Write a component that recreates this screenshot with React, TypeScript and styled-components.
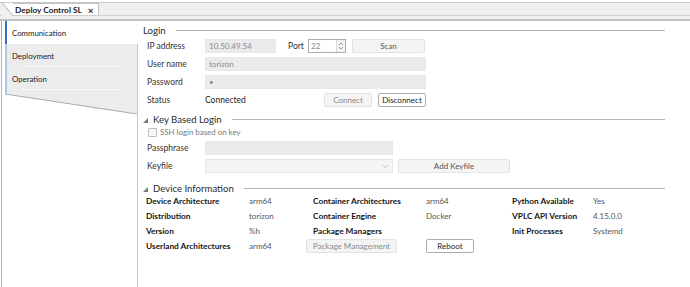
import React from 'react'
import styled, { createGlobalStyle } from 'styled-components'

const GlobalStyle = createGlobalStyle`
    html, body {
        margin : 0;
        padding : 0;
        background : #ffffff;
    }
    body {
        font-family : Lato, "Liberation Sans", sans-serif;
        font-size : 8.5px;
        color : #333333;
    }
    * {
        box-sizing : border-box;
    }
`

const sideItems = ['Communication', 'Deployment', 'Operation']

const deviceRows = [
    ['Device Architecture', 'arm64', 'Container Architectures', 'arm64', 'Python Available', 'Yes'],
    ['Distribution', 'torizon', 'Container Engine', 'Docker', 'VPLC API Version', '4.15.0.0'],
    ['Version', '%h', 'Package Managers', '', 'Init Processes', 'Systemd'],
]

const App = () => {
    return (
        <>
            <GlobalStyle />
            <Window>
                <TabStrip>
                    <DocTab>
                        <span>Deploy Control SL</span>
                        <CloseMark>×</CloseMark>
                    </DocTab>
                </TabStrip>
                <TabBase />

                <Body>
                    <Sidebar>
                        {sideItems.map((it, i) => (
                            <SideItem key={it} selected={i === 0}>{it}</SideItem>
                        ))}
                        <SideSlant>
                            <svg width='132' height='24' viewBox='0 0 132 24'>
                                <polygon points='0,0 132,0 132,24 0,4' fill='#ececec' />
                                <line x1='0' y1='4' x2='132' y2='24' stroke='#a9a9a9' strokeWidth='1' />
                                <line x1='1' y1='0' x2='1' y2='4' stroke='#a9c8ea' strokeWidth='2' />
                            </svg>
                        </SideSlant>
                        <SideRest />
                    </Sidebar>

                    <Main>
                        <SectionHeader>Login</SectionHeader>
                        <Form top={3}>
                            <FormRow>
                                <Label>IP address</Label>
                                <Field width={71}>10.50.49.54</Field>
                                <PortLabel>Port</PortLabel>
                                <Spin>
                                    <span>22</span>
                                    <SpinArrows>
                                        <svg width='6' height='10' viewBox='0 0 6 10'>
                                            <path d='M1 4 L3 2 L5 4' fill='none' stroke='#888' strokeWidth='0.9' />
                                            <path d='M1 6 L3 8 L5 6' fill='none' stroke='#888' strokeWidth='0.9' />
                                        </svg>
                                    </SpinArrows>
                                </Spin>
                                <Button width={73} gap={6}>Scan</Button>
                            </FormRow>
                            <FormRow>
                                <Label>User name</Label>
                                <Field width={221}>torizon</Field>
                            </FormRow>
                            <FormRow>
                                <Label>Password</Label>
                                <Field width={221}>•</Field>
                            </FormRow>
                            <FormRow>
                                <Label>Status</Label>
                                <StatusText>Connected</StatusText>
                                <Button width={48} dim>Connect</Button>
                                <Button width={48} gap={6} active>Disconnect</Button>
                            </FormRow>
                        </Form>

                        <SectionHeader collapsible gapTop={6}>Key Based Login</SectionHeader>
                        <Form top={2}>
                            <CheckRow>
                                <CheckBox />
                                <span>SSH login based on key</span>
                            </CheckRow>
                            <FormRow>
                                <Label>Passphrase</Label>
                                <Field width={188} />
                            </FormRow>
                            <FormRow>
                                <Label>Keyfile</Label>
                                <Combo>
                                    <svg width='7' height='5' viewBox='0 0 7 5'>
                                        <path d='M1 1 L3.5 3.5 L6 1' fill='none' stroke='#b8b8b8' strokeWidth='0.9' />
                                    </svg>
                                </Combo>
                                <Button width={112} gap={5}>Add Keyfile</Button>
                            </FormRow>
                        </Form>

                        <SectionHeader collapsible gapTop={9}>Device Information</SectionHeader>
                        <DeviceGrid>
                            {deviceRows.map((row) => row.map((cell, i) => (
                                i % 2 === 0
                                    ? <InfoLabel key={`${row[0]}_${i}`}>{cell}</InfoLabel>
                                    : <InfoValue key={`${row[0]}_${i}`}>{cell}</InfoValue>
                            )))}
                            <InfoLabel>Userland Architectures</InfoLabel>
                            <InfoValue>arm64</InfoValue>
                            <GridButtonCell>
                                <Button width={91} dim shift={-7}>Package Management</Button>
                            </GridButtonCell>
                            <GridButtonCell>
                                <Button width={48} active>Reboot</Button>
                            </GridButtonCell>
                        </DeviceGrid>
                    </Main>
                </Body>
            </Window>
        </>
    )
}

const Window = styled.div`
    width : 690px;
    height : 287px;
    display : flex;
    flex-direction : column;
    overflow : hidden;
    background : #ffffff;
`

const TabStrip = styled.div`
    margin-top : 2px;
    height : 14px;
    border-top : 1px solid #c9c9c9;
    border-bottom : 1px solid #d0d0d0;
    background : #efefef;
    display : flex;
    align-items : flex-end;
    padding-left : 2px;
`

const DocTab = styled.div`
    position : relative;
    height : 12px;
    display : flex;
    align-items : center;
    gap : 6px;
    padding : 0 4px 0 13px;
    background : #ffffff;
    border-top : 1px solid #c2c2c2;
    border-right : 1px solid #c2c2c2;
    font-weight : bold;
    font-size : 8.3px;
    color : #1a1a1a;

    &::before {
        content : '';
        position : absolute;
        left : 0;
        top : -1px;
        width : 11px;
        height : 13px;
        background : linear-gradient(to top right, #efefef 47%, #b8b8b8 50%, #ffffff 58%);
    }
`

const CloseMark = styled.span`
    font-size : 10px;
    line-height : 1;
    color : #222222;
`

const TabBase = styled.div`
    height : 5px;
    background : #f0f0f0;
    border-bottom : 2px solid #c3c3c3;
`

const Body = styled.div`
    flex : 1;
    display : flex;
    min-height : 0;
`

const Sidebar = styled.div`
    width : 137px;
    margin-left : 1px;
    border-left : 1px solid #b3b3b3;
    padding-left : 3px;
    display : flex;
    flex-direction : column;
`

const SideItem = styled.div<{ selected?: boolean }>`
    position : relative;
    height : 23px;
    display : flex;
    align-items : center;
    padding-left : 5px;
    font-size : 7.8px;
    color : #222222;
    background : ${(p) => (p.selected ? '#ffffff' : '#ececec')};
    border-left : 2px solid ${(p) => (p.selected ? '#2e6fc4' : '#a9c8ea')};
    border-right : 1px solid ${(p) => (p.selected ? 'transparent' : '#c8c8c8')};

    &::after {
        content : '';
        position : absolute;
        left : 15px;
        right : 15px;
        bottom : 0;
        height : 1px;
        background : ${(p) => (p.selected ? 'transparent' : '#fafafa')};
    }
`

const SideSlant = styled.div`
    height : 24px;
    display : flex;
    border-right : 1px solid #c8c8c8;

    svg {
        display : block;
    }
`

const SideRest = styled.div`
    flex : 1;
    border-right : 1px solid #c8c8c8;
`

const Main = styled.div`
    flex : 1;
    padding : 3px 25px 0 5px;
    display : flex;
    flex-direction : column;
`

const SectionHeader = styled.div<{ collapsible?: boolean; gapTop?: number }>`
    height : 12px;
    margin-top : ${(p) => p.gapTop ?? 0}px;
    display : flex;
    align-items : center;
    gap : 8px;
    font-size : 9.6px;
    color : #2a2a2a;

    &::before {
        content : '';
        display : ${(p) => (p.collapsible ? 'block' : 'none')};
        width : 0;
        height : 0;
        margin-right : -3px;
        border-left : 5px solid transparent;
        border-bottom : 5px solid #7a7a7a;
        align-self : center;
        margin-top : 3px;
    }

    &::after {
        content : '';
        flex : 1;
        height : 1px;
        background : #b5b5b5;
        margin-left : 2px;
    }
`

const Form = styled.div<{ top: number }>`
    padding-left : 4px;
    padding-top : ${(p) => p.top}px;
    display : flex;
    flex-direction : column;
    gap : 4px;
`

const FormRow = styled.div`
    height : 14px;
    display : flex;
    align-items : center;
`

const Label = styled.div`
    width : 58px;
    color : #333333;
`

const Field = styled.div<{ width: number }>`
    width : ${(p) => p.width}px;
    height : 14px;
    display : flex;
    align-items : center;
    padding-left : 3px;
    background : #ebebeb;
    border : 1px solid #e8e8e8;
    color : #8a8a8a;
    font-size : 8px;
`

const PortLabel = styled.div`
    margin-left : 12px;
    width : 20px;
`

const Spin = styled.div`
    width : 38px;
    height : 14px;
    display : flex;
    align-items : center;
    justify-content : space-between;
    padding-left : 2px;
    background : #ffffff;
    border : 1px solid #acacac;
    color : #888888;
    font-size : 8px;
`

const SpinArrows = styled.div`
    width : 9px;
    height : 12px;
    display : flex;
    align-items : center;
    justify-content : center;
    border-left : 1px solid #d8d8d8;
    background : #f4f4f4;
`

const Button = styled.div<{ width: number; gap?: number; dim?: boolean; active?: boolean; shift?: number }>`
    width : ${(p) => p.width}px;
    height : 14px;
    margin-left : ${(p) => p.gap ?? p.shift ?? 0}px;
    display : flex;
    align-items : center;
    justify-content : center;
    border-radius : 2px;
    font-size : 8px;
    background : ${(p) => (p.active ? '#ffffff' : '#f4f4f4')};
    border : 1px solid ${(p) => (p.active ? '#adadad' : '#e3e3e3')};
    color : ${(p) => (p.active ? '#1e1e1e' : p.dim ? '#8a8a8a' : '#555555')};
`

const StatusText = styled.div`
    width : 119px;
    color : #222222;
`

const CheckRow = styled.div`
    height : 10px;
    display : flex;
    align-items : center;
    gap : 3px;
    padding-left : 1px;
    font-size : 7.9px;
    color : #7a7a7a;
`

const CheckBox = styled.div`
    width : 9px;
    height : 9px;
    border : 1px solid #bdbdbd;
    border-radius : 1px;
    background : #f7f7f7;
`

const Combo = styled.div`
    width : 188px;
    height : 14px;
    display : flex;
    align-items : center;
    justify-content : flex-end;
    padding-right : 3px;
    background : #f4f4f4;
    border : 1px solid #e6e6e6;
`

const DeviceGrid = styled.div`
    padding-left : 3px;
    display : grid;
    grid-template-columns : 103px 64px 113px 86px 81px 1fr;
    grid-auto-rows : 15px;
    align-items : center;
    margin-top : -1px;
`

const InfoLabel = styled.div`
    font-weight : bold;
    color : #151515;
    font-size : 8.3px;
`

const InfoValue = styled.div`
    color : #555555;
    font-size : 8px;
`

const GridButtonCell = styled.div`
    display : flex;
    align-items : center;
`

export default App
